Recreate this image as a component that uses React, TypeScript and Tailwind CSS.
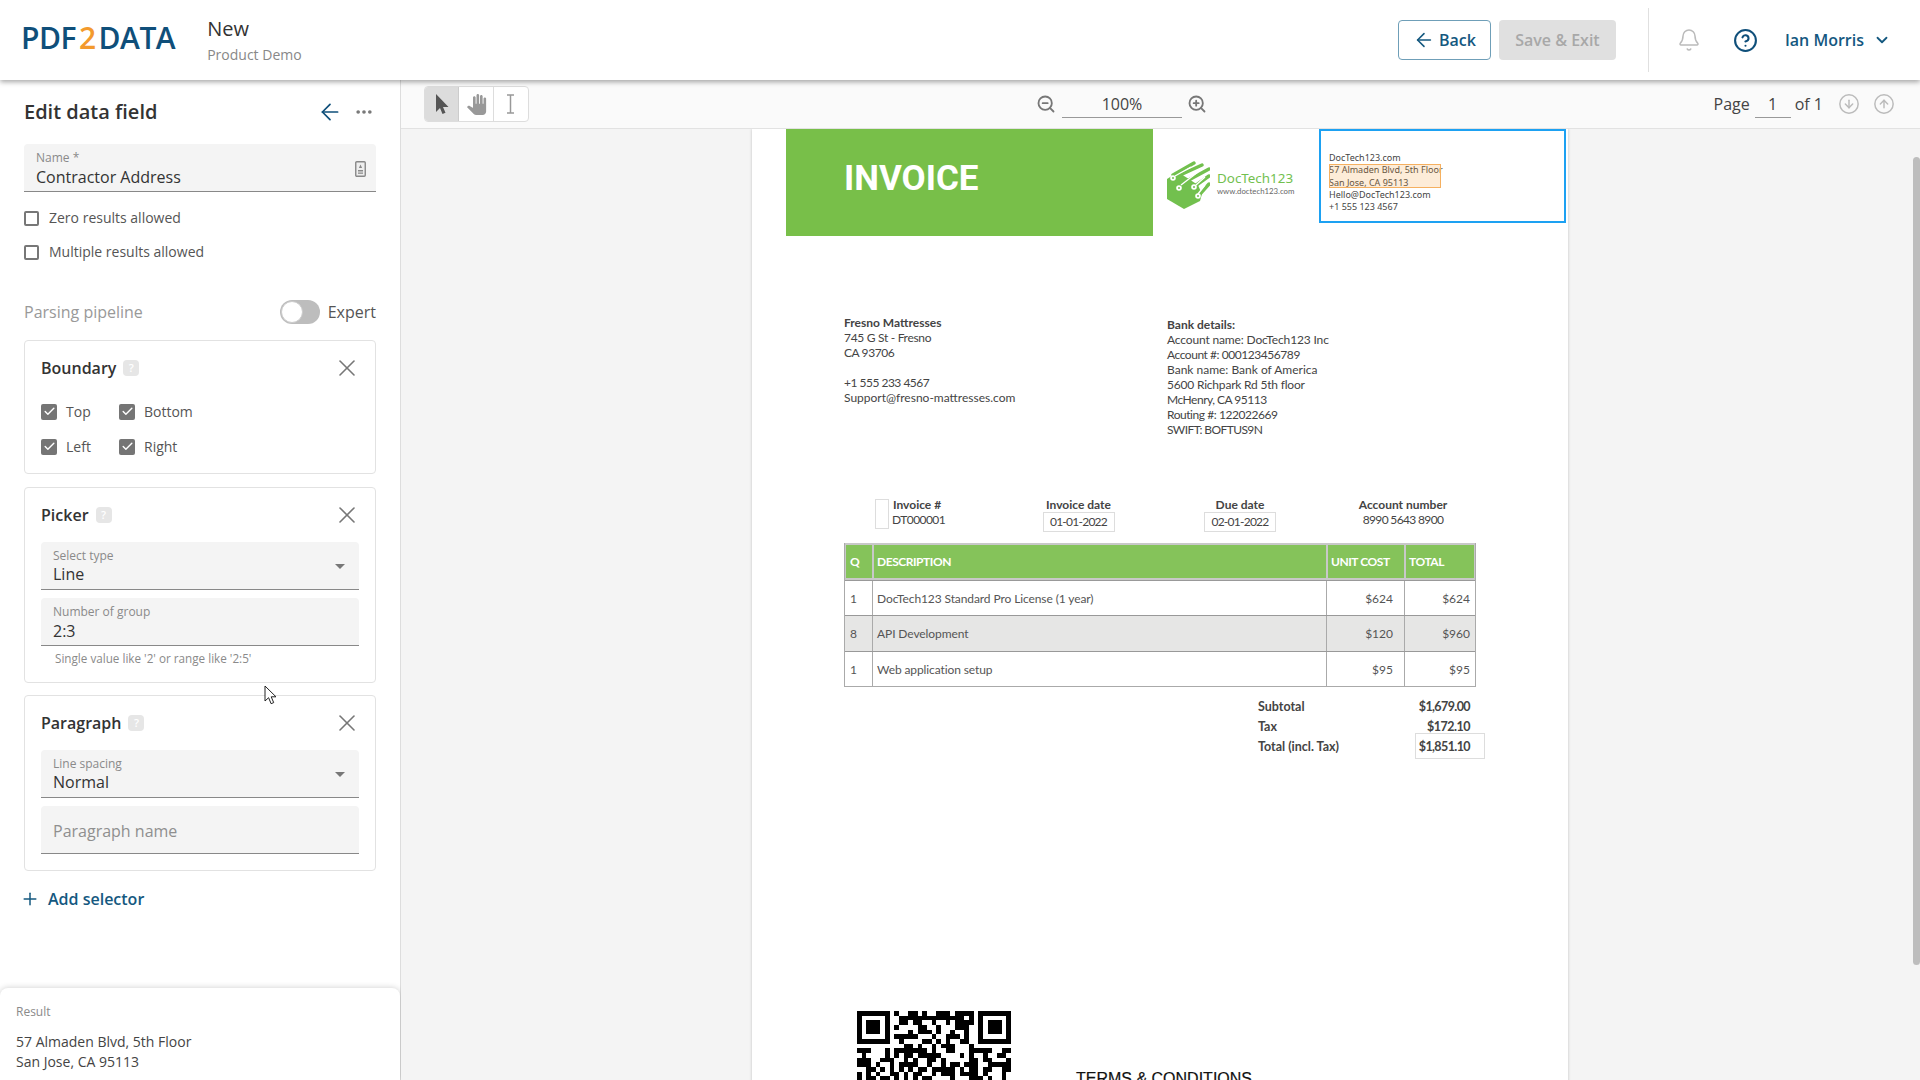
import { ArrowLeft, Bell, Check, ChevronDown, CircleArrowDown, CircleArrowUp, CircleHelp, Ellipsis, Plus, X, ZoomIn, ZoomOut } from "lucide-react";
import { MdPanTool } from "react-icons/md";

function Logo() {
  return (
    <div className="-mt-[4px] -ml-[3px] flex items-center text-[30px] leading-none font-semibold tracking-[-0.5px] text-[#0f4f7a]">
      PDF<span className="mx-[3px] text-[#f39a2d]">2</span>DATA
    </div>
  );
}

function Field({ label, value, select, placeholder }: { label?: string; value?: string; select?: boolean; placeholder?: string }) {
  return (
    <div className="relative h-12 rounded-t bg-[#f4f4f4] border-b border-[#888] px-3 pt-[6px]">
      {label && <div className="text-xs leading-4 text-[#8a8a8a]">{label}</div>}
      {value && <div className={`text-base leading-[22px] text-[#333] ${select ? "-mt-px" : ""}`}>{value}</div>}
      {placeholder && <div className="pt-[8px] text-base leading-[22px] text-[#8f8f8f]">{placeholder}</div>}
      {select && <div className="absolute right-[14px] top-[22px] h-0 w-0 border-x-[5px] border-t-[5px] border-x-transparent border-t-[#777]" />}
    </div>
  );
}

function CardTitle({ title }: { title: string }) {
  return (
    <div className="flex h-[54px] items-center justify-between pl-4 pr-[14px]">
      <div className="flex items-center gap-[7px]">
        <span className="text-base font-semibold text-[#333]">{title}</span>
        <span className="flex h-4 w-4 items-center justify-center rounded-sm bg-[#e6e6e6] text-[11px] font-semibold text-white">?</span>
      </div>
      <X className="h-7 w-7 text-[#777]" strokeWidth={1.4} />
    </div>
  );
}

function Checked({ label, width }: { label: string; width: string }) {
  return (
    <div className={`flex items-center gap-[9px] ${width}`}>
      <span className="flex h-4 w-4 items-center justify-center rounded-[2px] bg-[#757575]">
        <Check className="h-[13px] w-[13px] text-white" strokeWidth={2.6} />
      </span>
      <span className="text-sm text-[#555]">{label}</span>
    </div>
  );
}

function Unchecked({ label }: { label: string }) {
  return (
    <div className="flex h-[34px] items-center gap-[10px]">
      <span className="h-[15px] w-[15px] rounded-[2px] border-2 border-[#777]" />
      <span className="text-sm text-[#555]">{label}</span>
    </div>
  );
}

function Sidebar() {
  return (
    <aside className="relative h-full w-[401px] shrink-0 border-r border-[#ddd] bg-white">
      <div className="px-6">
        <div className="flex h-16 items-center justify-between">
          <h1 className="text-xl font-semibold text-[#333]">Edit data field</h1>
          <div className="flex items-center gap-[11px] pr-[2px]">
            <ArrowLeft className="h-[26px] w-[26px] text-[#0f4f7a]" strokeWidth={1.6} />
            <Ellipsis className="h-5 w-5 text-[#777]" strokeWidth={2.4} />
          </div>
        </div>
        <div className="relative h-12 rounded-t bg-[#f4f4f4] border-b border-[#888] px-3 pt-[6px]">
          <div className="text-xs leading-4 text-[#8a8a8a]">Name *</div>
          <div className="text-base leading-[22px] text-[#333]">Contractor Address</div>
          <svg className="absolute right-[10px] top-[17px] h-[16px] w-[11px] text-[#888]" viewBox="0 0 11 16">
            <rect x="0.75" y="0.75" width="9.5" height="14.5" rx="1" fill="#eee" stroke="currentColor" strokeWidth="1.4" />
            <path d="M5.5 3.5l1.6 3.5H3.9zM3 9h5v1.4H3zM3 11.4h5v1.4H3z" fill="currentColor" />
          </svg>
        </div>
        <div className="mt-[9px]">
          <Unchecked label="Zero results allowed" />
          <Unchecked label="Multiple results allowed" />
        </div>
        <div className="mt-[31px] flex h-6 items-center justify-between">
          <span className="text-base text-[#999]">Parsing pipeline</span>
          <div className="flex items-center gap-[8px]">
            <span className="relative h-6 w-10 rounded-full bg-[#bdbdbd]">
              <span className="absolute left-px top-px h-[22px] w-[22px] rounded-full border border-[#ccc] bg-white" />
            </span>
            <span className="text-base text-[#555]">Expert</span>
          </div>
        </div>

        <section className="mt-4 h-[134px] rounded border border-[#e2e2e2]">
          <CardTitle title="Boundary" />
          <div className="mt-[8px] flex flex-col gap-[18px] px-4">
            <div className="flex h-[17px] items-center"><Checked label="Top" width="w-[78px]" /><Checked label="Bottom" width="w-[100px]" /></div>
            <div className="flex h-[17px] items-center"><Checked label="Left" width="w-[78px]" /><Checked label="Right" width="w-[100px]" /></div>
          </div>
        </section>

        <section className="mt-[13px] h-[196px] rounded border border-[#e2e2e2]">
          <CardTitle title="Picker" />
          <div className="flex flex-col gap-2 px-4">
            <Field label="Select type" value="Line" select />
            <Field label="Number of group" value="2:3" />
          </div>
          <div className="mt-[4px] pl-[30px] text-[11.7px] leading-4 text-[#8a8a8a]">Single value like '2' or range like '2:5'</div>
        </section>

        <section className="mt-[12px] h-[176px] rounded border border-[#e2e2e2]">
          <CardTitle title="Paragraph" />
          <div className="flex flex-col gap-2 px-4">
            <Field label="Line spacing" value="Normal" select />
            <Field placeholder="Paragraph name" />
          </div>
        </section>

        <div className="mt-[16px] -ml-1 flex items-center gap-2 text-[#14587f]">
          <Plus className="h-5 w-5" strokeWidth={1.8} />
          <span className="text-base font-semibold">Add selector</span>
        </div>
      </div>

      <div className="absolute bottom-0 left-0 h-[92px] w-full rounded-t-lg bg-white px-4 pt-4 shadow-[0_0_6px_rgba(0,0,0,0.2)]">
        <div className="text-xs leading-4 text-[#8a8a8a]">Result</div>
        <div className="mt-[12px] text-sm leading-5 text-[#444]">57 Almaden Blvd, 5th Floor<br />San Jose, CA 95113</div>
      </div>
      <svg className="absolute left-[264px] top-[605px] h-[20px] w-[14px]" viewBox="0 0 14 20">
        <path d="M1 1v15l3.6-3.3 2.5 6 2.6-1.1-2.5-5.8H12z" fill="#fff" stroke="#222" strokeWidth="1" />
      </svg>
    </aside>
  );
}

function Toolbar() {
  return (
    <div className="flex h-[49px] shrink-0 items-center border-b border-[#e2e2e2] bg-[#fafafa] pl-[23px] pr-[25px]">
      <div className="flex h-9 w-[105px] overflow-hidden rounded border border-[#ddd] bg-white">
        <div className="flex w-[35px] items-center justify-center border-r border-[#ccc] bg-[#dcdcdc]">
          <svg className="h-[20px] w-[14px] text-[#555]" viewBox="0 0 14 20"><path d="M1 0v18l4-4 2.5 6 3-1.300L8 13h5.500z" fill="currentColor" /></svg>
        </div>
        <div className="flex w-[35px] items-center justify-center border-r border-[#ddd]">
          <MdPanTool className="h-[21px] w-[21px] text-[#999]" />
        </div>
        <div className="flex w-[35px] items-center justify-center">
          <svg className="h-[20px] w-[9px] text-[#999]" viewBox="0 0 9 20" fill="none" stroke="currentColor" strokeWidth="1.500"><path d="M1 1h7M4.500 1v18M1 19h7" /></svg>
        </div>
      </div>
      <div className="ml-[507px] flex items-center">
        <ZoomOut className="h-[20px] w-[20px] text-[#777]" strokeWidth={2.2} />
        <div className="ml-[6px] mr-[5px] h-[27px] w-[120px] border-b border-[#999] text-center text-base leading-[27px] text-[#444]">100%</div>
        <ZoomIn className="h-[20px] w-[20px] text-[#777]" strokeWidth={2.2} />
      </div>
      <div className="ml-auto flex items-center">
        <span className="text-base text-[#444]">Page</span>
        <div className="ml-[5px] mr-[4px] h-[27px] w-9 border-b border-[#999] text-center text-base leading-[27px] text-[#444]">1</div>
        <span className="text-base text-[#444]">of 1</span>
        <CircleArrowDown className="ml-[15px] h-[22px] w-[22px] text-[#bbb]" strokeWidth={1.6} />
        <CircleArrowUp className="ml-[13px] h-[22px] w-[22px] text-[#bbb]" strokeWidth={1.6} />
      </div>
    </div>
  );
}

function DocLogo() {
  return (
    <div className="ml-[14px] flex w-[152px] pt-[32px]">
      <svg className="h-[48px] w-[43px] shrink-0" viewBox="0 0 43 48">
        <path d="M0 18L11 11 31 24 35 33 33 40 17 48 0 38z" fill="#72c04e" />
        <g stroke="#72c04e" strokeWidth="3.400" strokeLinecap="round">
          <path d="M6 14L27 2M11 15L35 4M18 21L42 8M28 25L42 15M33 33L42 23" />
        </g>
        <g fill="none" stroke="#fff" strokeWidth="1.400">
          <path d="M8 15L24 6M14 24L31 11M29 24L38 16M31 33L38 24" />
        </g>
        <g fill="#fff">
          <circle cx="6" cy="17" r="2.800" /><circle cx="12" cy="27" r="2.800" /><circle cx="27" cy="26" r="2.800" /><circle cx="31" cy="35" r="2.800" />
        </g>
        <g fill="#72c04e">
          <circle cx="6" cy="17" r="1" /><circle cx="12" cy="27" r="1" /><circle cx="27" cy="26" r="1" /><circle cx="31" cy="35" r="1" />
        </g>
      </svg>
      <div className="ml-[7px] pt-[9px]">
        <div className="font-['Noto_Sans',sans-serif] text-[13.400px] leading-[16px] text-[#72c04e]">DocTech123</div>
        <div className="text-[7.800px] leading-[11px] text-[#666]">www.doctech123.com</div>
      </div>
    </div>
  );
}

function SenderBox() {
  return (
    <div className="relative h-[94px] w-[247px] border-2 border-[#1da1f2] pl-2 pt-[21px] font-['Noto_Sans',sans-serif] text-[9px] leading-[12.300px] text-[#444]">
      <div>DocTech123.com</div>
      <div>57 Almaden Blvd, 5th Floor</div>
      <div>San Jose, CA 95113</div>
      <div>Hello@DocTech123.com</div>
      <div>+1 555 123 4567</div>
      <div className="absolute left-2 top-[33px] h-[24px] w-[112px] border border-[#f5b060] bg-[#f7a13d]/20" />
    </div>
  );
}

const rows = [
  { q: "1", desc: "DocTech123 Standard Pro License (1 year)", unit: "$624", total: "$624", bg: "bg-white", h: "h-[35px]" },
  { q: "8", desc: "API Development", unit: "$120", total: "$960", bg: "bg-[#e6e6e5]", h: "h-[36px]" },
  { q: "1", desc: "Web application setup", unit: "$95", total: "$95", bg: "bg-white", h: "h-[35px]" },
];

function InvoiceTable() {
  return (
    <div className="mt-[11px] ml-[92px] w-[632px] border-x border-b border-[#aaa] text-[12px]">
      <div className="grid h-[37px] grid-cols-[28px_454px_78px_70px] border-x border-y-2 border-[#c8c8c8] bg-[#85c35a] font-bold tracking-[-0.45px] text-white">
        <div className="flex items-center border-r-2 border-[#c8c8c8] pl-[4px]">Q</div>
        <div className="flex items-center border-r-2 border-[#c8c8c8] pl-[3px]">DESCRIPTION</div>
        <div className="flex items-center border-r-2 border-[#c8c8c8] pl-[3px]">UNIT COST</div>
        <div className="flex items-center pl-[3px]">TOTAL</div>
      </div>
      {rows.map((r, i) => (
        <div key={i} className={`grid grid-cols-[28px_454px_78px_70px] border-t border-[#999] text-[#555] ${r.bg} ${r.h}`}>
          <div className="flex items-center border-r border-[#aaa] pl-[5px]">{r.q}</div>
          <div className="flex items-center border-r border-[#aaa] pl-[4px] tracking-[-0.1px]">{r.desc}</div>
          <div className="flex items-center justify-end border-r border-[#aaa] pr-[11px]">{r.unit}</div>
          <div className="flex items-center justify-end pr-[5px]">{r.total}</div>
        </div>
      ))}
    </div>
  );
}

function Qr() {
  const n = 33;
  let seed = 48271;
  const cells: [number, number][] = [];
  const inFinder = (x: number, y: number) => (x < 8 && y < 8) || (x >= n - 8 && y < 8) || (x < 8 && y >= n - 8);
  for (let y = 0; y < n; y++) {
    for (let x = 0; x < n; x++) {
      seed = (seed * 16807) % 2147483647;
      if (!inFinder(x, y) && seed % 100 < 55) cells.push([x, y]);
    }
  }
  return (
    <svg className="h-[154px] w-[154px] shrink-0" viewBox="0 0 33 33" shapeRendering="crispEdges">
      {cells.map(([x, y]) => <rect key={`${x}-${y}`} x={x} y={y} width="1" height="1" fill="#000" />)}
      {[[0, 0], [26, 0], [0, 26]].map(([x, y]) => (
        <g key={`${x}-${y}`}>
          <rect x={x} y={y} width="7" height="7" fill="#000" />
          <rect x={x + 1} y={y + 1} width="5" height="5" fill="#fff" />
          <rect x={x + 2} y={y + 2} width="3" height="3" fill="#000" />
        </g>
      ))}
    </svg>
  );
}

function InvoicePage() {
  return (
    <div className="ml-[351px] h-[1056px] w-[816px] shrink-0 bg-white font-['Lato',sans-serif] text-[12px] leading-[15px] text-[#444] shadow-[0_0_3px_rgba(0,0,0,0.2)]">
      <div className="flex items-start pl-[34px]">
        <div className="flex h-[107px] w-[367px] items-start bg-[#78bf49] pl-[58px] pt-[29px] font-['Roboto',sans-serif] text-[35px] leading-[42px] font-bold text-white">INVOICE</div>
        <DocLogo />
        <SenderBox />
      </div>

      <div className="mt-[79px] flex pl-[92px]">
        <div className="w-[323px]">
          <div className="font-bold">Fresno Mattresses</div>
          <div className="tracking-[-0.3px]">745 G St - Fresno</div>
          <div className="tracking-[-0.4px]">CA 93706</div>
          <div className="mt-[15px] tracking-[-0.5px]">+1 555 233 4567</div>
          <div>Support@fresno-mattresses.com</div>
        </div>
        <div className="mt-[2px]">
          <div className="font-bold">Bank details:</div>
          <div className="tracking-[-0.15px]">Account name: DocTech123 Inc</div>
          <div className="tracking-[-0.45px]">Account #: 000123456789</div>
          <div>Bank name: Bank of America</div>
          <div className="tracking-[-0.2px]">5600 Richpark Rd 5th floor</div>
          <div className="tracking-[-0.5px]">McHenry, CA 95113</div>
          <div className="tracking-[-0.45px]">Routing #: 122022669</div>
          <div className="tracking-[-0.6px]">SWIFT: BOFTUS9N</div>
        </div>
      </div>

      <div className="mt-[60px] flex pl-[123px]">
        <div className="flex w-[123px] gap-[3px]">
          <div className="mt-[2px] h-[30px] w-[14px] border border-[#ddd]" />
          <div>
            <div className="pl-px font-bold">Invoice #</div>
            <div className="tracking-[-0.55px]">DT000001</div>
          </div>
        </div>
        <div className="flex w-[161px] flex-col items-center">
          <div className="font-bold">Invoice date</div>
          <div className="w-[72px] border border-[#ddd] text-center leading-[18px] tracking-[-0.75px]">01-01-2022</div>
        </div>
        <div className="flex w-[162px] flex-col items-center">
          <div className="font-bold">Due date</div>
          <div className="w-[72px] border border-[#ddd] text-center leading-[18px] tracking-[-0.75px]">02-01-2022</div>
        </div>
        <div className="flex w-[164px] flex-col items-center">
          <div className="font-bold">Account number</div>
          <div className="tracking-[-0.65px]">8990 5643 8900</div>
        </div>
      </div>

      <InvoiceTable />

      <div className="mt-[9px] ml-[506px] w-[212px] text-[12.500px] font-bold">
        <div className="flex h-5 items-center justify-between"><span>Subtotal</span><span className="tracking-[-0.6px]">$1,679.00</span></div>
        <div className="flex h-5 items-center justify-between"><span>Tax</span><span className="tracking-[-0.5px]">$172.10</span></div>
        <div className="relative flex h-5 items-center justify-between">
          <span>Total (incl. Tax)</span><span className="tracking-[-0.6px]">$1,851.10</span>
          <div className="absolute right-[-15px] top-[-3px] h-[26px] w-[70px] border border-[#ddd]" />
        </div>
      </div>

      <div className="mt-[255px] ml-[105px] flex">
        <Qr />
        <div className="ml-[65px] mt-[60px] font-['Liberation_Sans',sans-serif] text-[16px] leading-4 text-[#111] [-webkit-text-stroke:0.2px_#111]">TERMS &amp; CONDITIONS</div>
      </div>
    </div>
  );
}

export default function App() {
  return (
    <div className="flex h-screen w-full flex-col overflow-hidden bg-white font-['Open_Sans',sans-serif]">
      <header className="relative z-10 flex h-20 shrink-0 items-center bg-white pl-6 pr-[29px] shadow-[0_2px_5px_rgba(0,0,0,0.35)]">
        <Logo />
        <div className="ml-[32px]">
          <div className="text-xl leading-[26px] text-[#333]">New</div>
          <div className="mt-[3px] text-sm leading-5 text-[#888]">Product Demo</div>
        </div>
        <div className="ml-auto flex items-center">
          <button className="flex h-10 w-[93px] items-center justify-center gap-1 rounded border border-[#6f9fb8] text-base font-semibold text-[#14587f]">
            <ArrowLeft className="h-[22px] w-[22px]" strokeWidth={1.7} />Back
          </button>
          <button className="ml-2 h-10 w-[117px] rounded bg-[#e0e0e0] text-base font-semibold text-[#a8a8a8]">Save &amp; Exit</button>
          <div className="ml-8 h-16 w-px bg-[#e0e0e0]" />
          <Bell className="ml-[28px] h-6 w-6 text-[#bbb]" strokeWidth={1.5} />
          <CircleHelp className="ml-[32px] h-[25px] w-[25px] text-[#0f4f7a]" strokeWidth={2} />
          <span className="ml-[27px] text-base font-semibold text-[#14587f]">Ian Morris</span>
          <ChevronDown className="ml-[9px] h-[18px] w-[18px] text-[#14587f]" strokeWidth={2.4} />
        </div>
      </header>
      <div className="flex min-h-0 flex-1">
        <Sidebar />
        <main className="relative flex min-w-0 flex-1 flex-col bg-[#f4f4f4]">
          <Toolbar />
          <div className="min-h-0 flex-1 overflow-hidden">
            <InvoicePage />
          </div>
          <div className="absolute right-0 top-[77px] h-[808px] w-[7px] rounded-sm bg-[#bdbdbd]" />
        </main>
      </div>
    </div>
  );
}
